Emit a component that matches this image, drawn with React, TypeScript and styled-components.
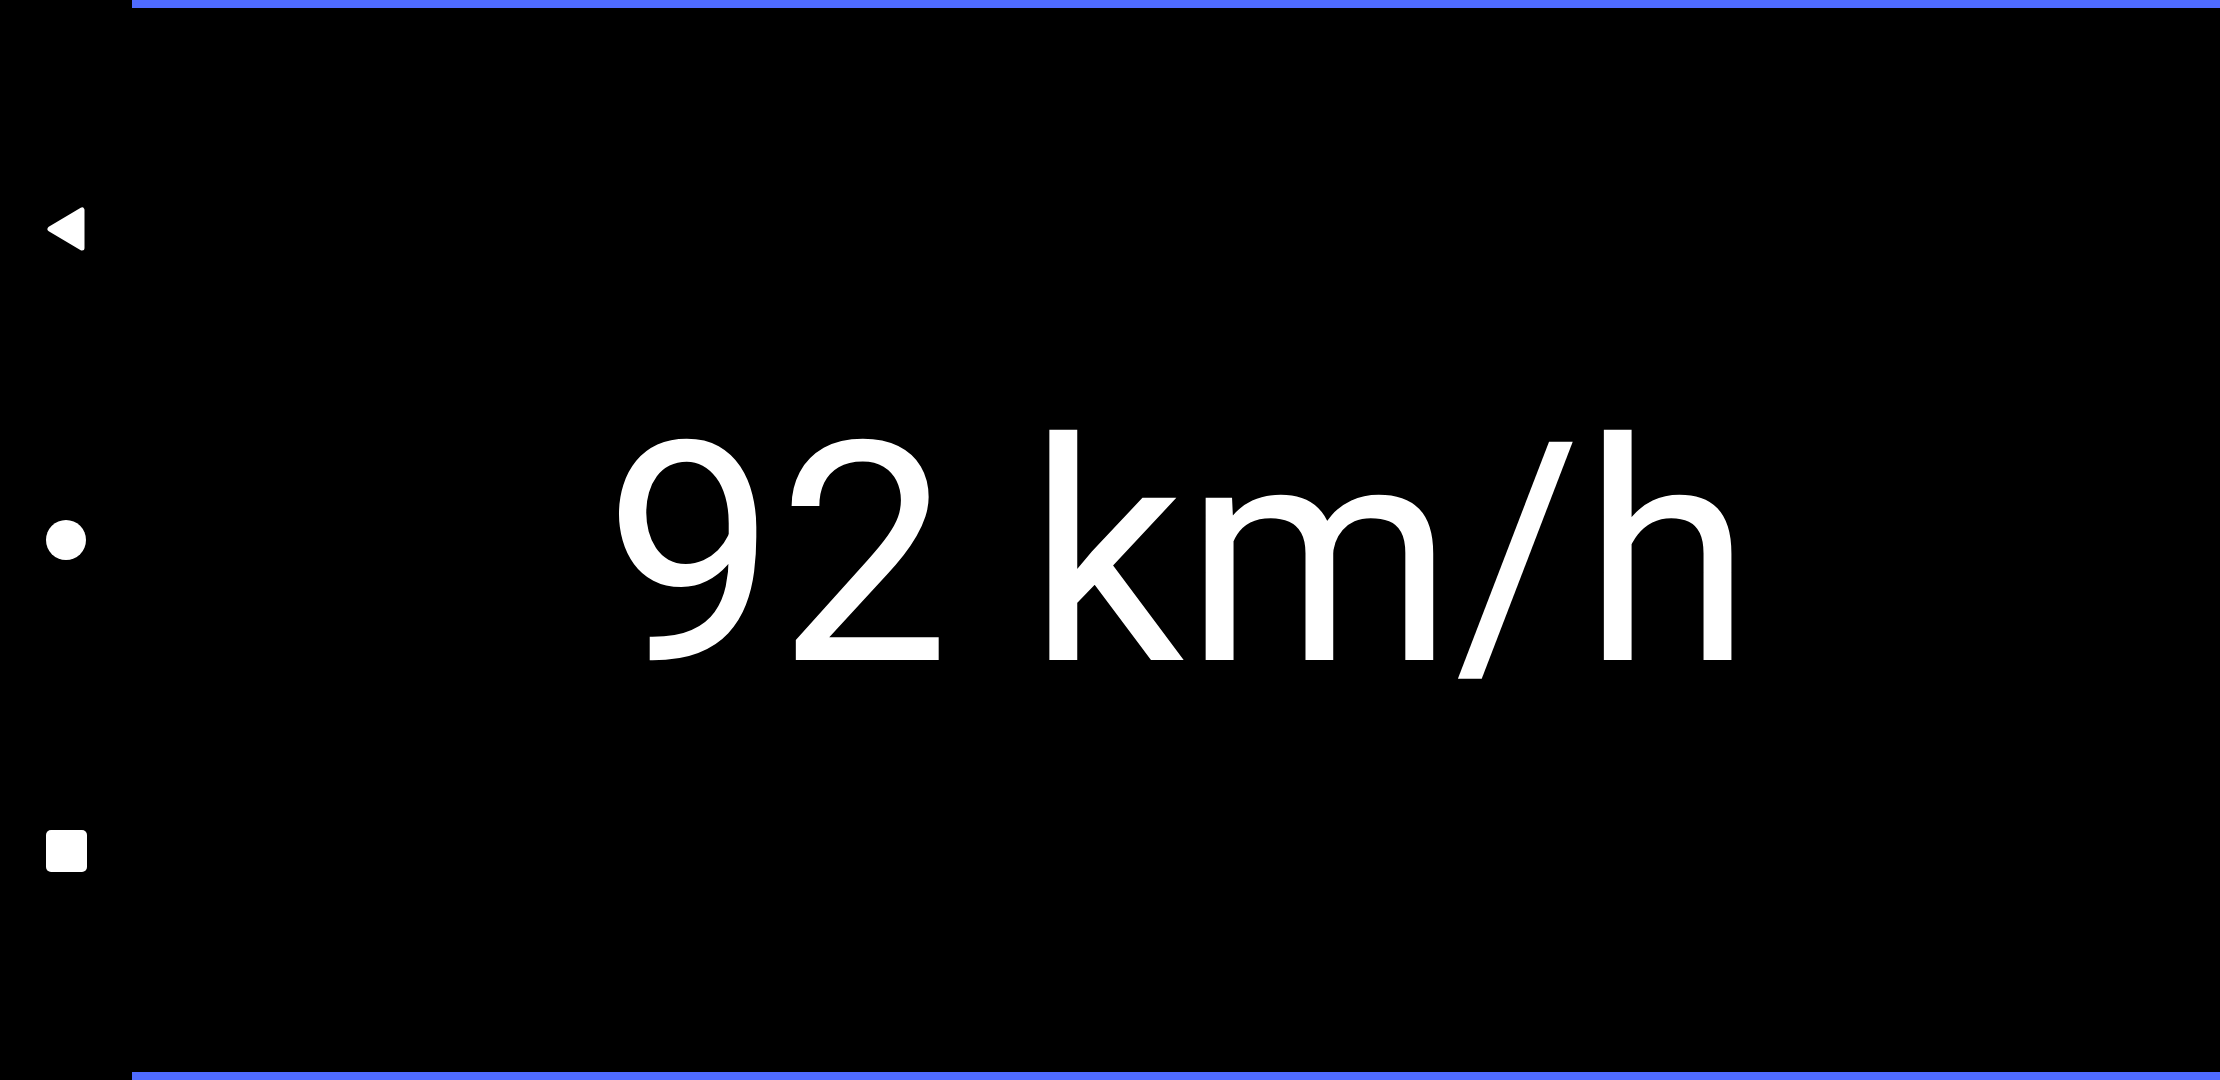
import React from 'react';
import styled, { createGlobalStyle } from 'styled-components';

const GlobalStyle = createGlobalStyle`
  html, body {
    margin: 0;
    padding: 0;
    background: #000;
  }
  body {
    font-family: Roboto, "Noto Sans", sans-serif;
  }
`;

const Screen = styled.div`
  display: flex;
  width: 2220px;
  height: 1080px;
  background: #000;
  overflow: hidden;
`;

const NavBar = styled.nav`
  width: 132px;
  flex: none;
  display: flex;
  flex-direction: column;
  justify-content: center;
`;

const NavButton = styled.div`
  height: 311px;
  display: flex;
  align-items: center;
  justify-content: center;
`;

const Dot = styled.div`
  width: 40px;
  height: 40px;
  border-radius: 50%;
  background: #fff;
`;

const Square = styled.div`
  width: 41px;
  height: 42px;
  border-radius: 5px;
  background: #fff;
`;

const Main = styled.main`
  flex: 1;
  display: flex;
  flex-direction: column;
`;

const AccentBar = styled.div`
  height: 8px;
  flex: none;
  background: #4f6bff;
`;

const Content = styled.section`
  flex: 1;
  display: flex;
  align-items: center;
  padding-left: 472px;
  padding-top: 31px;
`;

const Speed = styled.div`
  color: #fff;
  font-family: Roboto, "Noto Sans", sans-serif;
  font-weight: 400;
  font-size: 307px;
  letter-spacing: 1px;
  line-height: 1;
  white-space: nowrap;
`;

const BackIcon = () => (
  <svg width="44" height="50" viewBox="0 0 44 50">
    <path
      d="M6 25 L38 6 L38 44 Z"
      fill="#fff"
      stroke="#fff"
      strokeWidth="5"
      strokeLinejoin="round"
    />
  </svg>
);

export default function App() {
  return (
    <>
      <GlobalStyle />
      <Screen>
        <NavBar>
          <NavButton><BackIcon /></NavButton>
          <NavButton><Dot /></NavButton>
          <NavButton><Square /></NavButton>
        </NavBar>
        <Main>
          <AccentBar />
          <Content>
            <Speed>92 km/h</Speed>
          </Content>
          <AccentBar />
        </Main>
      </Screen>
    </>
  );
}
